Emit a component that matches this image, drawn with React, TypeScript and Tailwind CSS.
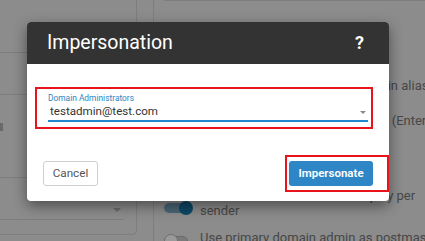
import React from "react";

function Toggle({ on }: { on: boolean }) {
  return (
    <div className="relative w-[29px] h-[14px] shrink-0 flex items-center">
      <div className={on ? "w-[24px] h-[10px] rounded-full bg-[#4a6676]" : "w-[24px] h-[10px] rounded-full bg-[#7a7a7a] border border-[#6a6a6a]"} />
      <div className={on ? "absolute right-0 top-0 w-[14px] h-[14px] rounded-full bg-[#0d4866]" : "absolute left-0 top-0 w-[14px] h-[14px] rounded-full bg-[#9a9a9a] border border-[#707070]"} />
    </div>
  );
}

export default function App() {
  return (
    <div
      className="relative w-[425px] h-[241px] overflow-hidden bg-[#8c8c8c]"
      style={{ fontFamily: "Roboto, 'Liberation Sans', sans-serif" }}
    >
      {/* background page (under overlay) */}
      <div className="flex h-full">
        <div className="w-[137px] shrink-0 flex flex-col">
          <div className="h-[53px] border-r border-b border-[#7d7d7d]" />
          <div className="h-[42px] border-r border-b border-[#7d7d7d]" />
          <div className="h-[83px] border-r border-b border-[#7d7d7d] relative">
            <div className="absolute left-0 top-[28px] w-[3px] h-[8px] bg-[#6a6a6a]" />
          </div>
          <div className="h-[57px] border-r border-b border-[#7d7d7d] rounded-br-[5px] pl-0 pr-[12px] pt-[30px]">
            <div className="h-[12px] border-b border-[#7d7d7d] flex justify-end items-start">
              <div className="w-0 h-0 border-l-[4px] border-r-[4px] border-t-[4px] border-l-transparent border-r-transparent border-t-[#6a6a6a] mr-[3px] mt-[0px]" />
            </div>
          </div>
        </div>
        <div className="w-[16px] shrink-0" />
        <div className="flex-1 border-l border-[#7d7d7d] pl-[10px] pr-[6px] flex flex-col text-[13px] text-[#474747]">
          <div className="h-[13px] border-b border-[#7d7d7d] text-[#6b6b6b] leading-[11px] pl-[3px] overflow-hidden">Logout URL</div>
          <div className="mt-[77px] flex items-center gap-[7px] whitespace-nowrap leading-[15px]">
            <Toggle on={false} />
            <span>Allow users to log in using domain aliases</span>
          </div>
          <div className="mt-[20px] flex items-center gap-[7px] whitespace-nowrap leading-[15px]">
            <Toggle on={false} />
            <span>Enable advanced sharing feature (Enterprise)</span>
          </div>
          <div className="mt-[60px] flex items-end gap-[7px] leading-[15px]">
            <div className="mb-[3px]"><Toggle on={true} /></div>
            <span className="whitespace-nowrap">Override sender From text display per<br />sender</span>
          </div>
          <div className="mt-[12px] flex items-start gap-[7px] whitespace-nowrap leading-[15px]">
            <div className="mt-[4px]"><Toggle on={false} /></div>
            <span>Use primary domain admin as postmaster address</span>
          </div>
        </div>
      </div>

      {/* dialog overlay */}
      <div className="absolute left-[27px] top-[22px] w-[362px] h-[179px] bg-white rounded-[4px] shadow-[0_5px_14px_rgba(0,0,0,0.45)] flex flex-col">
        <div className="h-[42px] bg-[#333333] rounded-t-[4px] flex items-center justify-between pl-[20px] pr-[25px]">
          <span className="text-white text-[19.5px] leading-none">Impersonation</span>
          <span className="text-white text-[18px] font-bold leading-none">?</span>
        </div>
        <div className="px-[21px] pt-[29px]">
          <div className="text-[8.4px] leading-[10px] text-[#2a86c4]">Domain Administrators</div>
          <div className="h-[19px] border-b-2 border-[#1f88d0] flex items-center justify-between pl-[2px] pr-[2px]">
            <span className="text-[11.6px] text-[#333] leading-none">testadmin@test.com</span>
            <div className="w-0 h-0 border-l-[3.5px] border-r-[3.5px] border-t-[3.5px] border-l-transparent border-r-transparent border-t-[#8a8a8a] mt-[2px]" />
          </div>
        </div>
        <div className="mt-auto flex justify-between items-end px-[16px] pb-[15px]">
          <button className="w-[55px] h-[25px] border border-[#cfcfcf] rounded-[3px] bg-white text-[11.7px] text-[#555]">Cancel</button>
          <button className="w-[84px] h-[25px] rounded-[3px] bg-[#2f86c6] text-[11.5px] font-semibold text-white">Impersonate</button>
        </div>
        {/* annotation boxes */}
        <div className="absolute left-[8px] top-[65px] w-[338px] h-[42px] border-2 border-[#e8131b]" />
        <div className="absolute left-[258px] top-[133px] w-[104px] h-[37px] border-2 border-[#e8131b]" />
      </div>
    </div>
  );
}
